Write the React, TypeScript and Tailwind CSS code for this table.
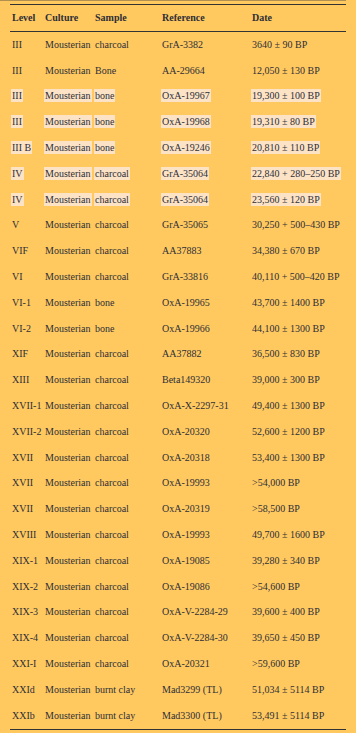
import React from 'react';

type Row = [string, string, string, string, string, boolean?];

const rows: Row[] = [
    ['III', 'Mousterian', 'charcoal', 'GrA-3382', '3640 ± 90 BP'],
    ['III', 'Mousterian', 'Bone', 'AA-29664', '12,050 ± 130 BP'],
    ['III', 'Mousterian', 'bone', 'OxA-19967', '19,300 ± 100 BP', true],
    ['III', 'Mousterian', 'bone', 'OxA-19968', '19,310 ± 80 BP', true],
    ['III B', 'Mousterian', 'bone', 'OxA-19246', '20,810 ± 110 BP', true],
    ['IV', 'Mousterian', 'charcoal', 'GrA-35064', '22,840 + 280–250 BP', true],
    ['IV', 'Mousterian', 'charcoal', 'GrA-35064', '23,560 ± 120 BP', true],
    ['V', 'Mousterian', 'charcoal', 'GrA-35065', '30,250 + 500–430 BP'],
    ['VIF', 'Mousterian', 'charcoal', 'AA37883', '34,380 ± 670 BP'],
    ['VI', 'Mousterian', 'charcoal', 'GrA-33816', '40,110 + 500–420 BP'],
    ['VI-1', 'Mousterian', 'bone', 'OxA-19965', '43,700 ± 1400 BP'],
    ['VI-2', 'Mousterian', 'bone', 'OxA-19966', '44,100 ± 1300 BP'],
    ['XIF', 'Mousterian', 'charcoal', 'AA37882', '36,500 ± 830 BP'],
    ['XIII', 'Mousterian', 'charcoal', 'Beta149320', '39,000 ± 300 BP'],
    ['XVII-1', 'Mousterian', 'charcoal', 'OxA-X-2297-31', '49,400 ± 1300 BP'],
    ['XVII-2', 'Mousterian', 'charcoal', 'OxA-20320', '52,600 ± 1200 BP'],
    ['XVII', 'Mousterian', 'charcoal', 'OxA-20318', '53,400 ± 1300 BP'],
    ['XVII', 'Mousterian', 'charcoal', 'OxA-19993', '>54,000 BP'],
    ['XVII', 'Mousterian', 'charcoal', 'OxA-20319', '>58,500 BP'],
    ['XVIII', 'Mousterian', 'charcoal', 'OxA-19993', '49,700 ± 1600 BP'],
    ['XIX-1', 'Mousterian', 'charcoal', 'OxA-19085', '39,280 ± 340 BP'],
    ['XIX-2', 'Mousterian', 'charcoal', 'OxA-19086', '>54,600 BP'],
    ['XIX-3', 'Mousterian', 'charcoal', 'OxA-V-2284-29', '39,600 ± 400 BP'],
    ['XIX-4', 'Mousterian', 'charcoal', 'OxA-V-2284-30', '39,650 ± 450 BP'],
    ['XXI-I', 'Mousterian', 'charcoal', 'OxA-20321', '>59,600 BP'],
    ['XXId', 'Mousterian', 'burnt clay', 'Mad3299 (TL)', '51,034 ± 5114 BP'],
    ['XXIb', 'Mousterian', 'burnt clay', 'Mad3300 (TL)', '53,491 ± 5114 BP'],
];

const cols = 'grid grid-cols-[33px_50px_67px_90px_1fr] items-center pl-[2px]';

const Cell: React.FC<{ text: string; hl?: boolean }> = ({ text, hl }) => (
    <div className="whitespace-nowrap">
        <span className={hl ? 'bg-[#fce3c6] px-[1px] -mx-[1px] py-[1px]' : ''}>{text}</span>
    </div>
);

export default function App() {
    return (
        <div className="w-full h-[733px] bg-[#ffc960] overflow-hidden text-[10px] leading-[12px] text-[#2e2e36]" style={{ fontFamily: '"Liberation Serif", "Times New Roman", serif' }}>
            <div className="h-px w-[346px] bg-[#3a3a3a]/40"></div>
            <div className="pl-[10px] w-[346px] pt-[3px]">
                {/* Header */}
                <div className={`${cols} h-[28px] border-t border-b border-[#333] font-bold`}>
                    <div>Level</div>
                    <div>Culture</div>
                    <div>Sample</div>
                    <div>Reference</div>
                    <div>Date</div>
                </div>
                {/* Body */}
                <div className="border-b border-[#333]">
                    {rows.map((r, i) => (
                        <div key={i} className={`${cols} h-[25.8px]`}>
                            <Cell text={r[0]} hl={r[5]} />
                            <Cell text={r[1]} hl={r[5]} />
                            <Cell text={r[2]} hl={r[5]} />
                            <Cell text={r[3]} hl={r[5]} />
                            <Cell text={r[4]} hl={r[5]} />
                        </div>
                    ))}
                </div>
            </div>
        </div>
    );
}
